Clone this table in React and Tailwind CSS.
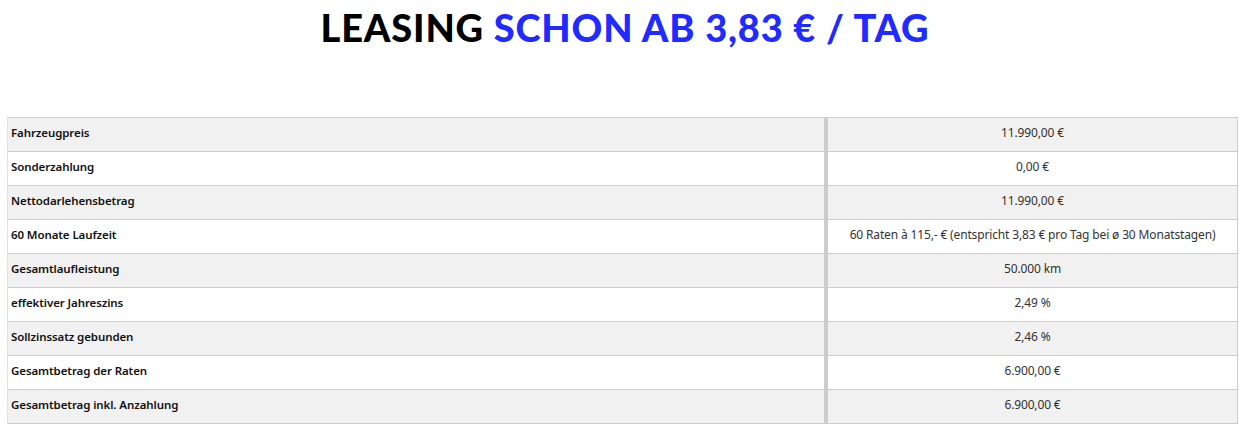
export default function App() {
  const rows = [
    ["Fahrzeugpreis", "11.990,00 €"],
    ["Sonderzahlung", "0,00 €"],
    ["Nettodarlehensbetrag", "11.990,00 €"],
    ["60 Monate Laufzeit", "60 Raten à 115,- € (entspricht 3,83 € pro Tag bei ø 30 Monatstagen)"],
    ["Gesamtlaufleistung", "50.000 km"],
    ["effektiver Jahreszins", "2,49 %"],
    ["Sollzinssatz gebunden", "2,46 %"],
    ["Gesamtbetrag der Raten", "6.900,00 €"],
    ["Gesamtbetrag inkl. Anzahlung", "6.900,00 €"],
  ];
  return (
    <div className="w-[1250px] h-[441px] bg-white overflow-hidden">
      <h1 className="text-center pt-[5px] text-[38px] leading-[44px] font-black tracking-[0.8px] font-['Lato',sans-serif]">
        <span className="text-black">LEASING </span>
        <span className="text-[#1f2bff]">SCHON AB 3,83 € / TAG</span>
      </h1>
      <div className="mt-[68px] ml-[7px] w-[1231px] border-l border-r border-t border-l-[#e2e2e2] border-r-[#cccccc] border-t-[#cccccc]">
        {rows.map(([k, v], i) => (
          <div
            key={i}
            className={`flex h-[34px] border-b border-[#cccccc] ${i % 2 === 0 ? "bg-[#f1f1f1]" : "bg-white"}`}
          >
            <div className="w-[816px] flex items-center pl-[3px] pb-[3px] text-[11.5px] font-semibold tracking-[-0.1px] text-[#111] font-['Noto_Sans',sans-serif]">
              {k}
            </div>
            <div className="w-[4px] bg-[#cccccc]" />
            <div className="flex-1 flex items-center justify-center pb-[3px] text-[12px] tracking-[-0.15px] text-[#333] font-['Noto_Sans',sans-serif]">
              {v}
            </div>
          </div>
        ))}
      </div>
    </div>
  );
}
